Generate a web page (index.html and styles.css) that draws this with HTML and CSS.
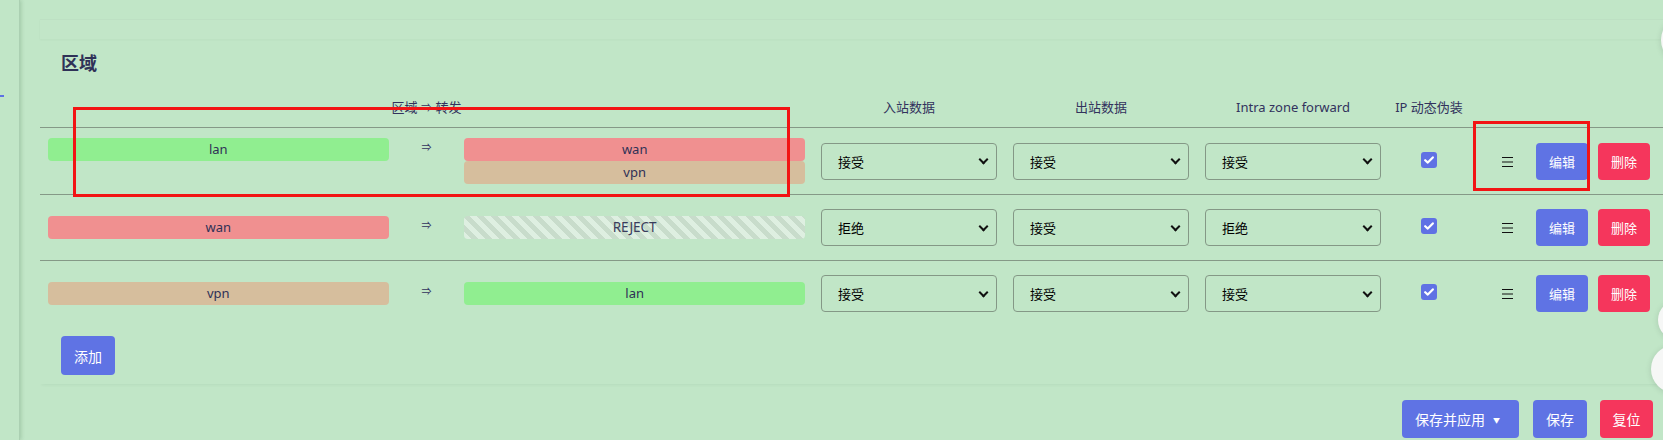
FILE: index.html
```html
<!DOCTYPE html>
<html lang="zh-CN">
<head>
<meta charset="utf-8">
<title>区域</title>
<link rel="stylesheet" href="styles.css">
</head>
<body>
<div class="app">
  <aside class="sidebar"><span class="mark"></span></aside>
  <main class="main">
    <div class="band"></div>
    <section class="panel">
      <h3 class="title">区域</h3>
      <div class="table">
        <div class="thead">
          <div>区域 <span class="harrow">⇒</span> 转发</div>
          <div>入站数据</div>
          <div>出站数据</div>
          <div>Intra zone forward</div>
          <div>IP 动态伪装</div>
          <div></div>
        </div>

        <div class="row">
          <div class="zonecell">
            <div class="badge lan">lan</div>
            <div class="arrow">⇒</div>
            <div class="fwd">
              <div class="badge wan">wan</div>
              <div class="badge vpn">vpn</div>
            </div>
          </div>
          <div class="cell"><div class="sel"><select><option>接受</option></select></div></div>
          <div class="cell"><div class="sel"><select><option>接受</option></select></div></div>
          <div class="cell"><div class="sel"><select><option>接受</option></select></div></div>
          <div class="cell center"><span class="check"><svg width="10" height="8" viewBox="0 0 10 8"><path d="M1.2 4.2 L3.8 6.6 L8.8 1.4" fill="none" stroke="#fff" stroke-width="2.2" stroke-linecap="round" stroke-linejoin="round"/></svg></span></div>
          <div class="cell acts">
            <svg class="handle" width="11" height="10" viewBox="0 0 11 10"><path d="M0 0.5H11M0 5H11M0 9.5H11" stroke="#111" stroke-width="1"/></svg>
            <button class="btn blue">编辑</button>
            <button class="btn red">删除</button>
          </div>
        </div>

        <div class="row">
          <div class="zonecell">
            <div class="badge wan">wan</div>
            <div class="arrow">⇒</div>
            <div class="fwd">
              <div class="badge reject">REJECT</div>
            </div>
          </div>
          <div class="cell"><div class="sel"><select><option>拒绝</option></select></div></div>
          <div class="cell"><div class="sel"><select><option>接受</option></select></div></div>
          <div class="cell"><div class="sel"><select><option>拒绝</option></select></div></div>
          <div class="cell center"><span class="check"><svg width="10" height="8" viewBox="0 0 10 8"><path d="M1.2 4.2 L3.8 6.6 L8.8 1.4" fill="none" stroke="#fff" stroke-width="2.2" stroke-linecap="round" stroke-linejoin="round"/></svg></span></div>
          <div class="cell acts">
            <svg class="handle" width="11" height="10" viewBox="0 0 11 10"><path d="M0 0.5H11M0 5H11M0 9.5H11" stroke="#111" stroke-width="1"/></svg>
            <button class="btn blue">编辑</button>
            <button class="btn red">删除</button>
          </div>
        </div>

        <div class="row">
          <div class="zonecell">
            <div class="badge vpn">vpn</div>
            <div class="arrow">⇒</div>
            <div class="fwd">
              <div class="badge lan">lan</div>
            </div>
          </div>
          <div class="cell"><div class="sel"><select><option>接受</option></select></div></div>
          <div class="cell"><div class="sel"><select><option>接受</option></select></div></div>
          <div class="cell"><div class="sel"><select><option>接受</option></select></div></div>
          <div class="cell center"><span class="check"><svg width="10" height="8" viewBox="0 0 10 8"><path d="M1.2 4.2 L3.8 6.6 L8.8 1.4" fill="none" stroke="#fff" stroke-width="2.2" stroke-linecap="round" stroke-linejoin="round"/></svg></span></div>
          <div class="cell acts">
            <svg class="handle" width="11" height="10" viewBox="0 0 11 10"><path d="M0 0.5H11M0 5H11M0 9.5H11" stroke="#111" stroke-width="1"/></svg>
            <button class="btn blue">编辑</button>
            <button class="btn red">删除</button>
          </div>
        </div>
      </div>
      <div class="addrow"><button class="btn blue add">添加</button></div>
    </section>
    <div class="footer">
      <button class="btn blue apply">保存并应用<span class="caret">▼</span></button>
      <button class="btn blue save">保存</button>
      <button class="btn red reset">复位</button>
    </div>
  </main>
</div>

<div class="fab fab1"></div>
<div class="fab fab2"></div>
<div class="fab fab3"></div>

<div class="mark-box box1"></div>
<div class="mark-box box2"></div>
</body>
</html>
```

FILE: styles.css
```css
* { box-sizing: border-box; }
html, body { margin: 0; padding: 0; }
body {
  width: 1663px;
  height: 440px;
  overflow: hidden;
  position: relative;
  background: #c1e6c7;
  color: #32325d;
  font-family: "Noto Sans", "Noto Sans CJK SC", sans-serif;
}

.app { display: flex; height: 440px; }

.sidebar {
  width: 20px;
  flex: none;
  padding-top: 95px;
  border-right: 1px solid #abd0b2;
  box-shadow: 1px 0 4px rgba(40, 90, 50, 0.22);
}
.sidebar .mark { display: block; width: 4px; height: 2px; background: #5e72e4; }

.main { flex: 1; padding: 19px 0 0 20px; min-width: 0; }

.band {
  height: 20px;
  background: #c2e6c8;
  border-top: 1px solid #bde0c3;
  box-shadow: 0 1px 2px rgba(40, 80, 50, 0.04);
}

.panel {
  padding-bottom: 9px;
  box-shadow: 0 3px 3px -2px rgba(40, 80, 50, 0.07);
}

.title {
  margin: 12px 0 0 21px;
  font-size: 18px;
  font-weight: 700;
  line-height: 24px;
  color: #2f3157;
}

.thead, .row {
  display: grid;
  grid-template-columns: 773px 192px 192px 192px 80px 1fr;
}

.thead {
  padding: 23px 0 10px;
  font-size: 13px;
  line-height: 18px;
  text-align: center;
  border-bottom: 1px solid #859987;
  color: #32325d;
}
.harrow { font-size: 11px; }

.row { min-height: 66px; align-items: center; }
.row + .row { border-top: 1px solid #859987; }

.zonecell {
  display: grid;
  grid-template-columns: 45% 10% 45%;
  align-items: start;
  padding: 0 8px;
}

.badge {
  height: 23px;
  line-height: 23px;
  text-align: center;
  border-radius: 4px;
  font-size: 13px;
  color: #2f3056;
}
.lan { background: #90ee90; }
.wan { background: #f09090; }
.vpn { background: #d6be9d; }
.reject {
  background: repeating-linear-gradient(45deg, #deefe1 0 5px, #c8dccb 5px 10px);
  color: #3a3c5c;
  font-size: 13.5px;
}

.arrow {
  text-align: center;
  font-size: 10px;
  line-height: 19px;
  color: #32325d;
}

.cell { padding: 0 8px; }
.center { display: flex; justify-content: center; }

.sel { position: relative; }
.sel::after {
  content: "";
  position: absolute;
  right: 10px;
  top: 50%;
  width: 5px;
  height: 5px;
  margin-top: -5px;
  border-right: 2.5px solid #111;
  border-bottom: 2.5px solid #111;
  transform: rotate(45deg);
  pointer-events: none;
}
select {
  appearance: none;
  -webkit-appearance: none;
  width: 100%;
  height: 37px;
  border: 1px solid #849886;
  border-radius: 4px;
  background: transparent;
  padding: 0 0 0 16px;
  font-family: "Noto Sans CJK SC", sans-serif;
  font-size: 13px;
  color: #000;
}

.check {
  width: 16px;
  height: 16px;
  border-radius: 3px;
  background: #6071e4;
  display: flex;
  align-items: center;
  justify-content: center;
  margin-top: -3px;
}

.acts {
  display: flex;
  align-items: center;
  justify-content: flex-end;
  padding-right: 13px;
}
.handle { margin-right: 23px; margin-top: 1px; }

.btn {
  border: 0;
  border-radius: 4px;
  color: #fff;
  font-family: "Noto Sans CJK SC", sans-serif;
  font-size: 13px;
  height: 37px;
  width: 52px;
  padding: 0;
}
.blue { background: #5f73e4; }
.red { background: #f5365c; }
.acts .blue { margin-right: 10px; }

.addrow { padding: 10px 0 0 21px; }
.btn.add { width: 54px; height: 39px; font-size: 14px; }

.footer {
  display: flex;
  justify-content: flex-end;
  gap: 13px;
  padding: 16px 10px 0 0;
}
.footer .btn { height: 38px; font-size: 14px; }
.footer .apply {
  width: 117px;
  margin-right: 1px;
  text-align: left;
  padding-left: 13px;
}
.footer .save { width: 54px; }
.footer .reset { width: 53px; }
.caret { font-size: 7px; margin-left: 8px; position: relative; top: -2px; }

.fab {
  position: absolute;
  border-radius: 50%;
  background: #f6f7f6;
  box-shadow: 0 1px 6px rgba(0, 0, 0, 0.12);
}
.fab1 { left: 1661px; top: 15px; width: 50px; height: 50px; }
.fab2 { left: 1658px; top: 300px; width: 40px; height: 40px; }
.fab3 { left: 1651px; top: 345px; width: 48px; height: 48px; }

.mark-box {
  position: absolute;
  border: 3px solid #f21414;
}
.box1 { left: 73px; top: 107px; width: 717px; height: 90px; }
.box2 { left: 1473px; top: 121px; width: 117px; height: 70px; }
```
